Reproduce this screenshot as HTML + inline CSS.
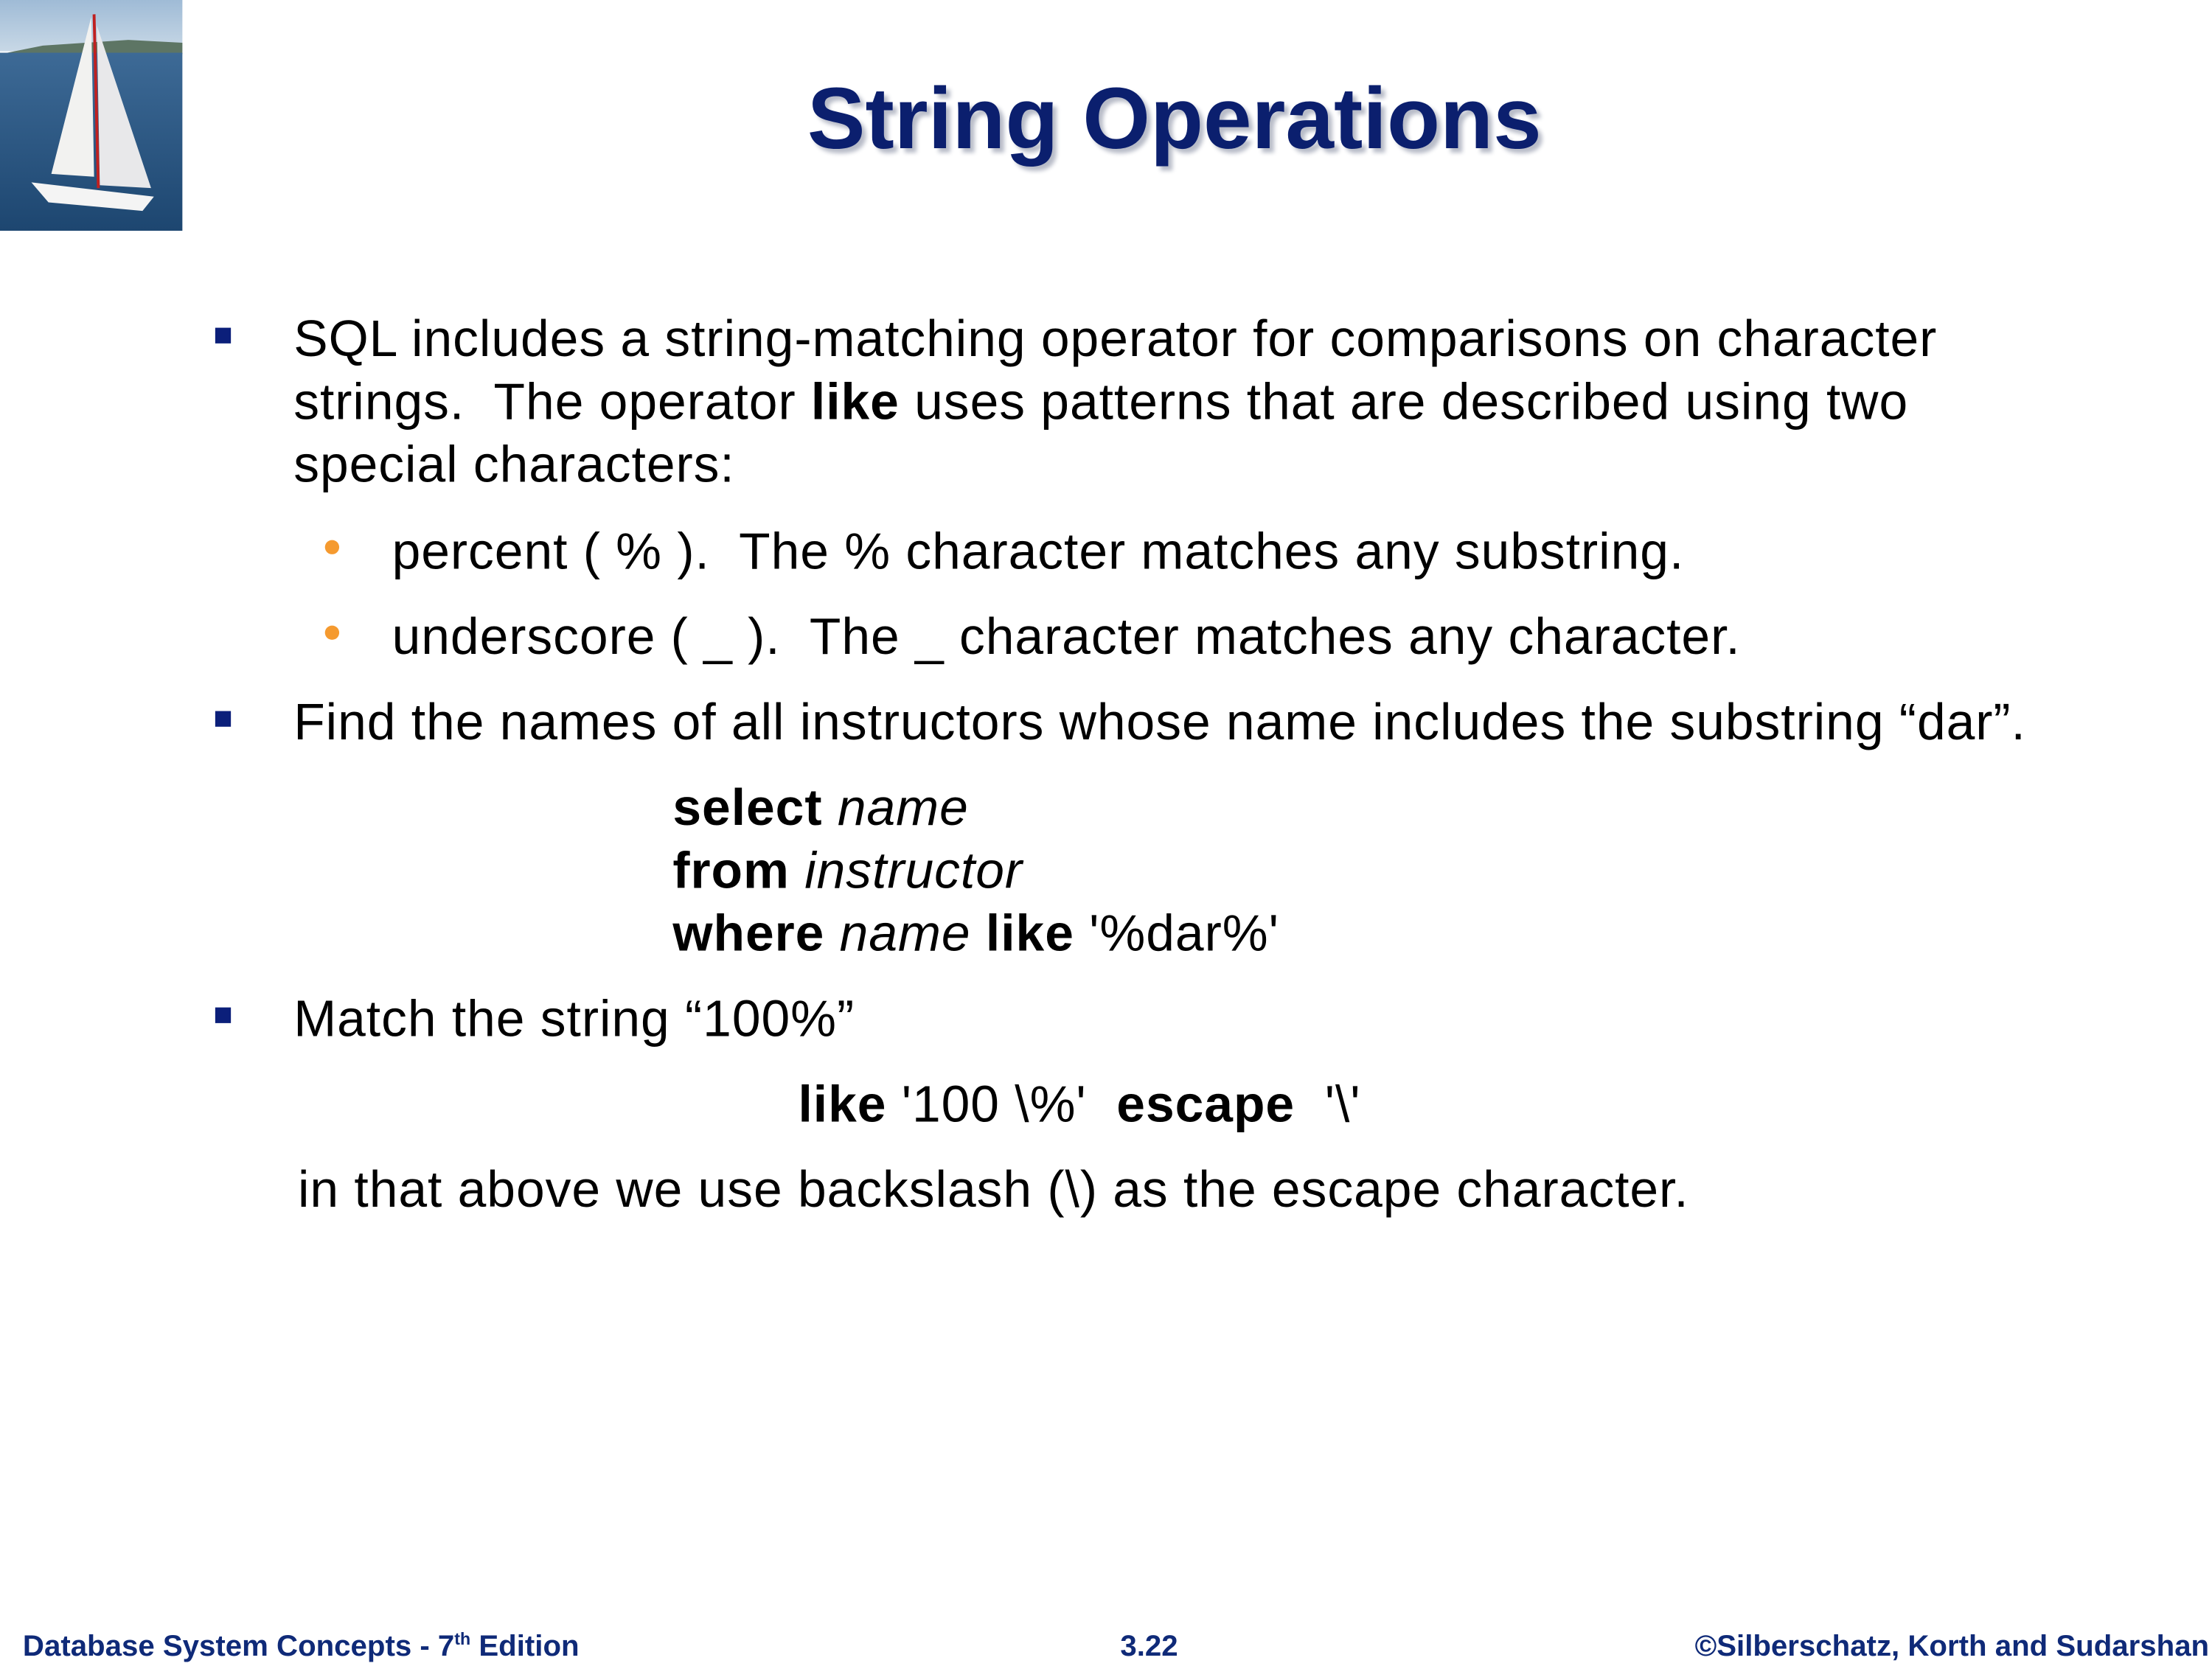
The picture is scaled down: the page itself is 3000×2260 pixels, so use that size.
<!DOCTYPE html>
<html><head><meta charset="utf-8"><style>
html,body{margin:0;padding:0;background:#fff;overflow:hidden;width:3000px;height:2250px}
#s{position:absolute;left:0;top:0;width:1552px;height:1164px;transform:scale(1.93299);transform-origin:0 0;font-family:"Liberation Sans",Arial,sans-serif;color:#000}
.t{position:absolute;white-space:nowrap;font-size:36px;letter-spacing:0.5px;line-height:44px}
.sq{position:absolute;width:11px;height:11px;background:#0b1f7a}
.dot{position:absolute;width:10px;height:10px;border-radius:50%;background:#f59a2f}
.f{position:absolute;top:1143px;font-size:20.8px;font-weight:bold;color:#0f2a78;white-space:nowrap;line-height:26px}
</style></head><body><div id="s">
<svg style="position:absolute;left:0;top:0" width="128" height="162" viewBox="0 0 128 162">
<defs><linearGradient id="sk" x1="0" y1="0" x2="0" y2="1"><stop offset="0" stop-color="#9fbbd6"/><stop offset="1" stop-color="#c8d8e6"/></linearGradient>
<linearGradient id="se" x1="0" y1="0" x2="0" y2="1"><stop offset="0" stop-color="#3d6a96"/><stop offset="1" stop-color="#1d4670"/></linearGradient></defs>
<rect width="128" height="36" fill="url(#sk)"/>
<path d="M0 38 L30 32 L60 30 L90 28 L128 30 L128 38 Z" fill="#5d7564"/>
<rect y="37" width="128" height="125" fill="url(#se)"/>
<path d="M64 12 L36 122 L66 124 Z" fill="#f2f2f0"/>
<path d="M68 18 L106 132 L70 130 Z" fill="#e8e8ea"/>
<line x1="66" y1="10" x2="69" y2="132" stroke="#c02020" stroke-width="2"/>
<path d="M22 128 L108 138 L100 148 L34 142 Z" fill="#f4f4f4"/>
</svg>
<div style="position:absolute;left:0;width:1648px;top:48px;text-align:center;font-size:61px;font-weight:bold;color:#0b1f6e;line-height:70px;text-shadow:3px 3px 3px #b8bcc8">String Operations</div>

<div class="sq" style="left:151px;top:230px"></div>
<div class="t" style="left:206px;top:216px">SQL includes a string-matching operator for comparisons on character</div>
<div class="t" style="left:206px;top:260px">strings.&nbsp; The operator <b>like</b> uses patterns that are described using two</div>
<div class="t" style="left:206px;top:304px">special characters:</div>

<div class="dot" style="left:228px;top:379px"></div>
<div class="t" style="left:275px;top:365px">percent ( % ).&nbsp; The % character matches any substring.</div>
<div class="dot" style="left:228px;top:439px"></div>
<div class="t" style="left:275px;top:425px">underscore ( _ ).&nbsp; The _ character matches any character.</div>

<div class="sq" style="left:151px;top:499px"></div>
<div class="t" style="left:206px;top:485px">Find the names of all instructors whose name includes the substring “dar”.</div>

<div class="t" style="left:472px;top:545px"><b>select</b> <i>name</i></div>
<div class="t" style="left:472px;top:589px"><b>from</b> <i>instructor</i></div>
<div class="t" style="left:472px;top:633px"><b>where</b> <i>name</i> <b>like</b> '%dar%'</div>

<div class="sq" style="left:151px;top:707px"></div>
<div class="t" style="left:206px;top:693px">Match the string “100%”</div>
<div class="t" style="left:560px;top:753px"><b>like</b> '100 \%'&nbsp; <b>escape</b>&nbsp; '\'</div>
<div class="t" style="left:209px;top:813px">in that above we use backslash (\) as the escape character.</div>

<div class="f" style="left:16px">Database System Concepts - 7<sup style="font-size:12px;line-height:0">th</sup> Edition</div>
<div class="f" style="left:786px">3.22</div>
<div class="f" style="right:2px">©Silberschatz, Korth and Sudarshan</div>
</div></body></html>
